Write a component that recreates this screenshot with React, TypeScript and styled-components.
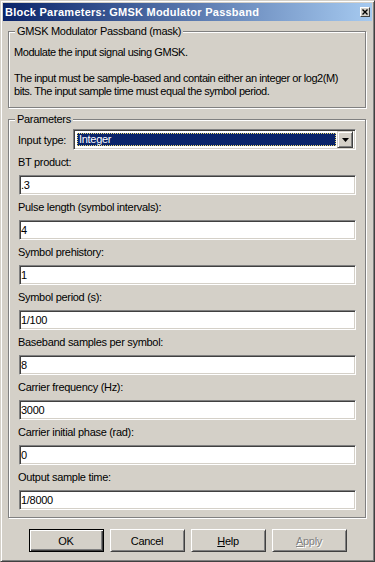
import React from 'react'
import styled, { createGlobalStyle } from 'styled-components'

const GlobalStyle = createGlobalStyle`
  body {
    margin: 0;
    background: #d4d0c8;
    font-family: 'Liberation Sans', Arial, sans-serif;
    font-size: 11px;
  }
`

const Window = styled.div`
  width: 375px;
  height: 562px;
  box-sizing: border-box;
  background: #d4d0c8;
  border: 1px solid;
  border-color: #d4d0c8 #404040 #404040 #d4d0c8;
  box-shadow: inset 1px 1px #fff, inset -1px -1px #808080;
  padding: 2px;
  color: #000;
  letter-spacing: -0.3px;
`

const TitleBar = styled.div`
  height: 18px;
  display: flex;
  align-items: center;
  justify-content: space-between;
  padding: 0 2px;
  background: linear-gradient(to right, #0a246a, #a6caf0);
`

const TitleText = styled.span`
  color: #fff;
  font-weight: bold;
  font-size: 11px;
  letter-spacing: 0.25px;
  white-space: nowrap;
`

const CloseButton = styled.div`
  width: 10px;
  height: 10px;
  box-sizing: border-box;
  background: #d4d0c8;
  border: 1px solid;
  border-color: #fff #404040 #404040 #fff;
  display: flex;
  align-items: center;
  justify-content: center;
`

const Body = styled.div`
  padding: 10px 6px 0 5px;
`

const GroupBox = styled.div<{ $pad: string }>`
  position: relative;
  border: 1px solid #808080;
  box-shadow: inset 1px 1px #fff, 1px 1px #fff;
  padding: ${(p) => p.$pad};
  & + & {
    margin-top: 11px;
  }
`

const Caption = styled.span`
  position: absolute;
  top: -7px;
  left: 6px;
  padding: 0 2px;
  line-height: 13px;
  background: #d4d0c8;
  white-space: nowrap;
`

const Description = styled.p`
  margin: 0;
  line-height: 13px;
  white-space: nowrap;
  letter-spacing: -0.45px;
`

const InputRow = styled.div`
  display: flex;
  align-items: center;
  height: 21px;
`

const RowLabel = styled.span`
  width: 55px;
  flex-shrink: 0;
  margin-left: -1px;
`

const Dropdown = styled.div`
  flex: 1;
  height: 21px;
  box-sizing: border-box;
  display: flex;
  background: #fff;
  border: 1px solid;
  border-color: #808080 #fff #fff #808080;
  box-shadow: inset 1px 1px #404040, inset -1px -1px #d4d0c8;
  padding: 2px;
`

const DropValue = styled.div`
  flex: 1;
  margin: 1px;
  box-sizing: border-box;
  background: #0a246a;
  border: 1px dotted #e8d870;
  color: #fff;
  line-height: 11px;
  padding-left: 1px;
`

const DropArrow = styled.div`
  width: 16px;
  margin: -1px 0;
  box-sizing: border-box;
  background: #d4d0c8;
  border: 1px solid;
  border-color: #d4d0c8 #404040 #404040 #d4d0c8;
  box-shadow: inset 1px 1px #fff, inset -1px -1px #808080;
  display: flex;
  align-items: center;
  justify-content: center;
`

const FieldLabel = styled.div`
  padding: 6px 0;
  line-height: 13px;
  margin-left: -1px;
`

const TextField = styled.input`
  display: block;
  width: 100%;
  height: 20px;
  box-sizing: border-box;
  margin: 0;
  padding: 0 1px;
  border: 1px solid;
  border-color: #808080 #fff #fff #808080;
  box-shadow: inset 1px 1px #404040, inset -1px -1px #d4d0c8;
  background: #fff;
  font-family: 'Liberation Sans', Arial, sans-serif;
  font-size: 11px;
  letter-spacing: -0.3px;
  color: #000;
  outline: none;
`

const ButtonRow = styled.div`
  display: flex;
  justify-content: center;
  gap: 6px;
  margin-top: 11px;
  padding-left: 1px;
`

const DialogButton = styled.button<{ $default?: boolean }>`
  width: 75px;
  height: 23px;
  box-sizing: border-box;
  margin: 0;
  padding: 0;
  background: #d4d0c8;
  font-family: 'Liberation Sans', Arial, sans-serif;
  font-size: 11px;
  letter-spacing: -0.3px;
  color: #000;
  border: 1px solid;
  border-color: ${(p) => (p.$default ? '#000' : '#fff #404040 #404040 #fff')};
  box-shadow: ${(p) =>
    p.$default
      ? 'inset 1px 1px #fff, inset -1px -1px #404040, inset -2px -2px #808080'
      : 'inset 1px 1px #d4d0c8, inset -1px -1px #808080'};
  &:disabled {
    color: #808080;
    text-shadow: 1px 1px #fff;
  }
`

const fields = [
  { label: 'BT product:', value: '.3' },
  { label: 'Pulse length (symbol intervals):', value: '4' },
  { label: 'Symbol prehistory:', value: '1' },
  { label: 'Symbol period (s):', value: '1/100' },
  { label: 'Baseband samples per symbol:', value: '8' },
  { label: 'Carrier frequency (Hz):', value: '3000' },
  { label: 'Carrier initial phase (rad):', value: '0' },
  { label: 'Output sample time:', value: '1/8000' },
]

function App() {
  return (
    <>
      <GlobalStyle />
      <Window>
        <TitleBar>
          <TitleText>Block Parameters: GMSK Modulator Passband</TitleText>
          <CloseButton>
            <svg width="6" height="6" viewBox="0 0 6 6">
              <path d="M0.5 0.5 L5.5 5.5 M5.5 0.5 L0.5 5.5" stroke="#000" strokeWidth="1.4" />
            </svg>
          </CloseButton>
        </TitleBar>
        <Body>
          <GroupBox $pad="14px 6px 9px 5px">
            <Caption>GMSK Modulator Passband (mask)</Caption>
            <Description>Modulate the input signal using GMSK.</Description>
            <Description>&nbsp;</Description>
            <Description>
              The input must be sample-based and contain either an integer or log2(M)
              <br />
              bits. The input sample time must equal the symbol period.
            </Description>
          </GroupBox>
          <GroupBox $pad="9px 9px 7px 10px">
            <Caption>Parameters</Caption>
            <InputRow>
              <RowLabel>Input type:</RowLabel>
              <Dropdown>
                <DropValue>Integer</DropValue>
                <DropArrow>
                  <svg width="7" height="4" viewBox="0 0 7 4">
                    <path d="M0 0 H7 L3.5 4 Z" fill="#000" />
                  </svg>
                </DropArrow>
              </Dropdown>
            </InputRow>
            {fields.map((f) => (
              <div key={f.label}>
                <FieldLabel>{f.label}</FieldLabel>
                <TextField readOnly value={f.value} />
              </div>
            ))}
          </GroupBox>
          <ButtonRow>
            <DialogButton $default>OK</DialogButton>
            <DialogButton>Cancel</DialogButton>
            <DialogButton>
              <u>H</u>elp
            </DialogButton>
            <DialogButton disabled>
              <u>A</u>pply
            </DialogButton>
          </ButtonRow>
        </Body>
      </Window>
    </>
  )
}

export default App
